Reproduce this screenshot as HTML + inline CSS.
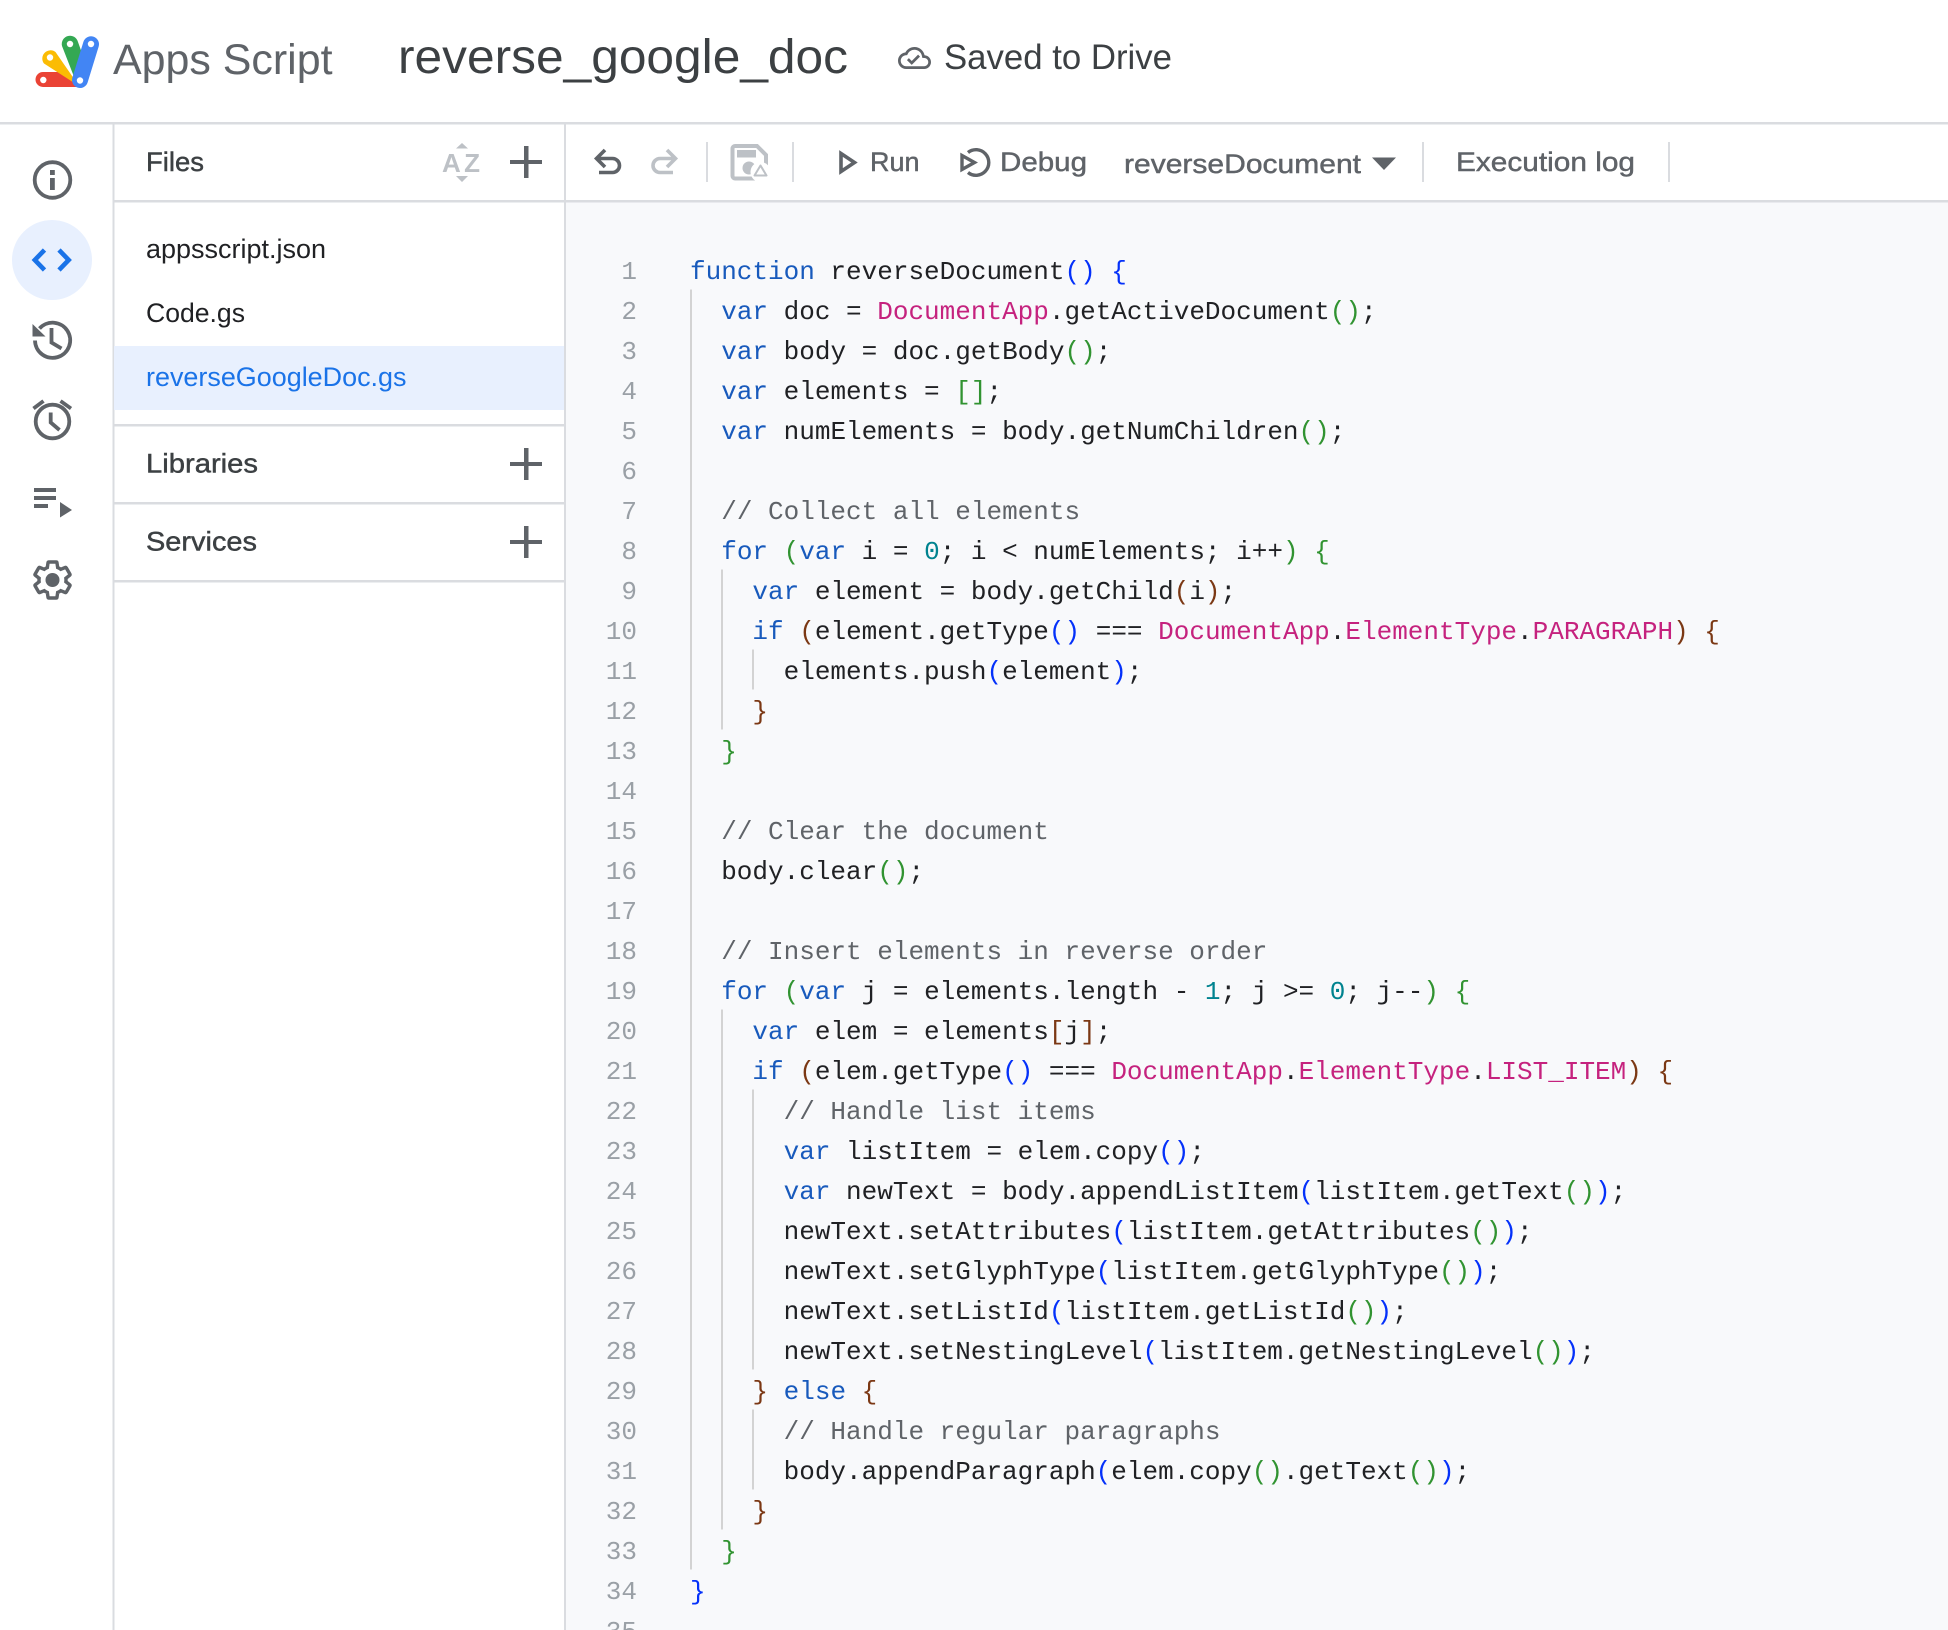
<!DOCTYPE html>
<html lang="en">
<head>
<meta charset="utf-8">
<title>Apps Script - reverse_google_doc</title>
<style>
html,body{margin:0;padding:0;background:#fff;width:1948px;height:1630px;overflow:hidden}
#page{position:relative;width:1948px;height:1630px;overflow:hidden;font-family:"Liberation Sans",sans-serif}
#bg{position:absolute;left:566px;top:202px;width:1382px;height:1428px;background:#f8f9fb}
svg{position:absolute;left:0;top:0}
pre{position:absolute;margin:0;font:26px/40px "Liberation Mono",monospace;white-space:pre;color:#202124}
#nums{left:577px;width:60px;top:252px;text-align:right;color:#9aa0a6}
#code{left:690px;top:252px}
.k{color:#185abc}.m{color:#c5227e}.c{color:#5f6368}.n{color:#00838f}
.b{color:#0431fa}.g{color:#319331}.r{color:#7b3814}
text{font-family:"Liberation Sans",sans-serif}
.med{stroke-width:.45px}
</style>
</head>
<body>
<div id="page">
<div id="bg"></div>
<svg width="1948" height="1630" viewBox="0 0 1948 1630">
  <!-- borders -->
  <g fill="#dadce0">
    <rect x="0" y="122" width="1948" height="2.5"/>
    <rect x="112.5" y="124" width="2" height="1506"/>
    <rect x="564" y="124" width="2" height="1506"/>
    <rect x="114" y="200" width="1834" height="2.5"/>
    <rect x="114" y="424" width="450" height="2.5"/>
    <rect x="114" y="502" width="450" height="2.5"/>
    <rect x="114" y="580" width="450" height="2.5"/>
    <rect x="706" y="142" width="2" height="40"/>
    <rect x="792" y="142" width="2" height="40"/>
    <rect x="1422" y="142" width="2" height="40"/>
    <rect x="1668" y="142" width="2" height="40"/>
  </g>
  <rect x="114" y="346" width="450" height="64" fill="#e8f0fe"/>

  <!-- logo -->
  <path d="M43 72H61L79 87H43a7.500 7.500 0 0 1 0-15z" fill="#ea4335"/>
  <path d="M44 63.500a8.200 8.200 0 0 1 11.500-11.500L79 86z" fill="#fbbc04"/>
  <path d="M62 46a8.200 8.200 0 0 1 16-4L88 70 78 87z" fill="#34a853"/>
  <path d="M91 44.300L80 80" stroke="#4285f4" stroke-width="16" stroke-linecap="round" fill="none"/>
  <g fill="#fff"><circle cx="43.300" cy="80" r="3.200"/><circle cx="50" cy="57.500" r="3.200"/><circle cx="70" cy="44" r="3.200"/><circle cx="91" cy="44" r="3.200"/><circle cx="80" cy="80.500" r="3.200"/></g>

  <!-- header text -->
  <text x="113" y="74" font-size="43" fill="#5f6368" textLength="219.500" lengthAdjust="spacingAndGlyphs">Apps Script</text>
  <text x="398" y="73" font-size="48" fill="#3c4043" textLength="450" lengthAdjust="spacingAndGlyphs">reverse_google_doc</text>
  <path transform="translate(898 41.500) scale(1.375)" fill="#5f6368" d="M19.350 10.040C18.670 6.590 15.640 4 12 4 9.110 4 6.600 5.640 5.350 8.040 2.340 8.360 0 10.910 0 14c0 3.310 2.690 6 6 6h13c2.760 0 5-2.240 5-5 0-2.640-2.050-4.780-4.650-4.960zM19 18H6c-2.210 0-4-1.790-4-4 0-2.050 1.530-3.760 3.560-3.970l1.070-.11.5-.95C8.080 7.140 9.940 6 12 6c2.620 0 4.880 1.860 5.390 4.430l.3 1.500 1.530.11c1.560.1 2.780 1.410 2.780 2.960 0 1.650-1.350 3-3 3zm-9-3.820l-2.090-2.090L6.500 13.500 10 17l6.010-6.010-1.410-1.410z"/>
  <text x="944" y="69" font-size="35" fill="#3c4043" textLength="228" lengthAdjust="spacingAndGlyphs">Saved to Drive</text>

  <!-- rail icons -->
  <circle cx="52.500" cy="180" r="17.800" fill="none" stroke="#5f6368" stroke-width="3.800"/>
  <rect x="50" y="170" width="4.800" height="5" fill="#5f6368"/>
  <rect x="50" y="178" width="4.800" height="12" fill="#5f6368"/>

  <circle cx="52" cy="260" r="40" fill="#e8f0fe"/>
  <path d="M44.500 250L34.800 260L44.500 270M59 250L68.700 260L59 270" fill="none" stroke="#1a73e8" stroke-width="4.600"/>

  <path d="M39.500 328.500A17.600 17.600 0 1 1 35 340.500" fill="none" stroke="#5f6368" stroke-width="3.800"/>
  <path d="M32.500 324V336.500H45.500z" fill="#5f6368"/>
  <path d="M51.500 328V342.500L61.500 348.500" fill="none" stroke="#5f6368" stroke-width="3.800"/>

  <circle cx="52.500" cy="421.500" r="16.800" fill="none" stroke="#5f6368" stroke-width="3.800"/>
  <path d="M33.500 408.500L43.500 401M60.500 401L71 408.500" fill="none" stroke="#5f6368" stroke-width="3.800"/>
  <path d="M50.700 412.500V422.500L59.500 430" fill="none" stroke="#5f6368" stroke-width="3.800"/>

  <g fill="#5f6368">
    <rect x="34" y="488" width="22" height="4"/>
    <rect x="34" y="496" width="22" height="4"/>
    <rect x="34" y="504" width="14" height="4"/>
    <path d="M60 502V517.500L72 510z"/>
  </g>

  <path transform="translate(30.900 558.400) scale(1.800)" fill="none" stroke="#5f6368" stroke-width="1.900" d="M19.430 12.980c.04-.32.07-.64.07-.98s-.03-.66-.07-.98l2.110-1.650c.19-.15.24-.42.12-.64l-2-3.460c-.12-.22-.39-.3-.61-.22l-2.490 1c-.52-.4-1.080-.73-1.690-.98l-.38-2.650C14.460 2.180 14.250 2 14 2h-4c-.25 0-.46.18-.49.42l-.38 2.650c-.61.25-1.170.59-1.690.98l-2.490-1c-.23-.09-.49 0-.61.22l-2 3.460c-.13.22-.07.49.12.64l2.110 1.650c-.04.32-.07.65-.07.98s.03.66.07.98l-2.110 1.650c-.19.15-.24.42-.12.64l2 3.460c.12.22.39.3.61.22l2.490-1c.52.4 1.080.73 1.690.98l.38 2.650c.03.24.24.42.49.42h4c.25 0 .46-.18.49-.42l.38-2.650c.61-.25 1.170-.59 1.690-.98l2.490 1c.23.09.49 0 .61-.22l2-3.460c.12-.22.07-.49-.12-.64l-2.110-1.650z"/>
  <circle cx="52.500" cy="580" r="7" fill="#5f6368"/>

  <!-- files panel -->
  <text x="146" y="171" font-size="27" fill="#3c4043" stroke="#3c4043" class="med" textLength="58" lengthAdjust="spacingAndGlyphs">Files</text>
  <text x="442" y="172" font-size="26" font-weight="bold" fill="#bdc1c6" textLength="38">AZ</text>
  <path d="M462 143L468 148.500H456zM462 182L468 176H456z" fill="#bdc1c6"/>
  <path d="M510 160h32v4h-32zM524 146h4.500v32H524z" fill="#5f6368"/>
  <text x="146" y="258" font-size="27" fill="#202124" textLength="180" lengthAdjust="spacingAndGlyphs">appsscript.json</text>
  <text x="146" y="322" font-size="27" fill="#202124" textLength="99" lengthAdjust="spacingAndGlyphs">Code.gs</text>
  <text x="146" y="386" font-size="27" fill="#1a73e8" textLength="260.500" lengthAdjust="spacingAndGlyphs">reverseGoogleDoc.gs</text>
  <text x="146" y="472.500" font-size="27" fill="#3c4043" stroke="#3c4043" class="med" textLength="112" lengthAdjust="spacingAndGlyphs">Libraries</text>
  <path d="M510 462h32v4h-32zM524 448h4.500v32H524z" fill="#5f6368"/>
  <text x="146" y="550.500" font-size="27" fill="#3c4043" stroke="#3c4043" class="med" textLength="111" lengthAdjust="spacingAndGlyphs">Services</text>
  <path d="M510 540h32v4h-32zM524 526h4.500v32H524z" fill="#5f6368"/>

  <!-- toolbar -->
  <path d="M605 150L596.500 158.500L605 167M597 158.500H612.500a7 7 0 0 1 0 14H599" fill="none" stroke="#5f6368" stroke-width="3.600"/>
  <path d="M667 150L675.500 158.500L667 167M675 158.500H660a7 7 0 0 0 0 14H673" fill="none" stroke="#bdc1c6" stroke-width="3.600"/>

  <path d="M735 146H757L766 155V176a2.500 2.500 0 0 1-2.500 2.500H735a2.500 2.500 0 0 1-2.500-2.500V148.500a2.500 2.500 0 0 1 2.500-2.500z" fill="none" stroke="#bdc1c6" stroke-width="4"/>
  <rect x="737" y="150" width="19" height="7.500" fill="#bdc1c6"/>
  <circle cx="749" cy="168" r="6.500" fill="#bdc1c6"/>
  <circle cx="760.500" cy="172" r="10" fill="#fff"/>
  <path d="M760.500 165.500L766.500 175.500H754.500z" fill="none" stroke="#bdc1c6" stroke-width="2" stroke-linejoin="round"/>

  <path d="M841 153.500V171.500L854.500 162.500z" fill="none" stroke="#5f6368" stroke-width="3.600"/>
  <text x="870" y="171" font-size="27" fill="#5f6368" stroke="#5f6368" class="med" textLength="49.500" lengthAdjust="spacingAndGlyphs">Run</text>
  <path d="M968 152.500A12.800 12.800 0 1 1 968 172.500" fill="none" stroke="#5f6368" stroke-width="3.400"/>
  <path d="M962 155.500V169.500L974.500 162.500z" fill="none" stroke="#5f6368" stroke-width="3.400"/>
  <text x="1000" y="171" font-size="27" fill="#5f6368" stroke="#5f6368" class="med" textLength="87" lengthAdjust="spacingAndGlyphs">Debug</text>
  <text x="1124" y="173" font-size="27" fill="#5f6368" stroke="#5f6368" class="med" textLength="237" lengthAdjust="spacingAndGlyphs">reverseDocument</text>
  <path d="M1372 157.500H1396L1384 170z" fill="#5f6368"/>
  <text x="1456" y="171" font-size="27" fill="#5f6368" stroke="#5f6368" class="med" textLength="179" lengthAdjust="spacingAndGlyphs">Execution log</text>

  <!-- indent guides -->
  <g fill="#d3d3d3">
    <rect x="690" y="289.500" width="2" height="1280"/>
    <rect x="721" y="569.500" width="2" height="160"/>
    <rect x="721" y="1009.500" width="2" height="520"/>
    <rect x="752" y="649.500" width="2" height="40"/>
    <rect x="752" y="1089.500" width="2" height="280"/>
    <rect x="752" y="1409.500" width="2" height="80"/>
  </g>
</svg>
<pre id="nums">1
2
3
4
5
6
7
8
9
10
11
12
13
14
15
16
17
18
19
20
21
22
23
24
25
26
27
28
29
30
31
32
33
34
35</pre>
<pre id="code"><span class="k">function</span> reverseDocument<span class="b">()</span> <span class="b">{</span>
  <span class="k">var</span> doc = <span class="m">DocumentApp</span>.getActiveDocument<span class="g">()</span>;
  <span class="k">var</span> body = doc.getBody<span class="g">()</span>;
  <span class="k">var</span> elements = <span class="g">[]</span>;
  <span class="k">var</span> numElements = body.getNumChildren<span class="g">()</span>;

  <span class="c">// Collect all elements</span>
  <span class="k">for</span> <span class="g">(</span><span class="k">var</span> i = <span class="n">0</span>; i &lt; numElements; i++<span class="g">)</span> <span class="g">{</span>
    <span class="k">var</span> element = body.getChild<span class="r">(</span>i<span class="r">)</span>;
    <span class="k">if</span> <span class="r">(</span>element.getType<span class="b">()</span> === <span class="m">DocumentApp</span>.<span class="m">ElementType</span>.<span class="m">PARAGRAPH</span><span class="r">)</span> <span class="r">{</span>
      elements.push<span class="b">(</span>element<span class="b">)</span>;
    <span class="r">}</span>
  <span class="g">}</span>

  <span class="c">// Clear the document</span>
  body.clear<span class="g">()</span>;

  <span class="c">// Insert elements in reverse order</span>
  <span class="k">for</span> <span class="g">(</span><span class="k">var</span> j = elements.length - <span class="n">1</span>; j &gt;= <span class="n">0</span>; j--<span class="g">)</span> <span class="g">{</span>
    <span class="k">var</span> elem = elements<span class="r">[</span>j<span class="r">]</span>;
    <span class="k">if</span> <span class="r">(</span>elem.getType<span class="b">()</span> === <span class="m">DocumentApp</span>.<span class="m">ElementType</span>.<span class="m">LIST_ITEM</span><span class="r">)</span> <span class="r">{</span>
      <span class="c">// Handle list items</span>
      <span class="k">var</span> listItem = elem.copy<span class="b">()</span>;
      <span class="k">var</span> newText = body.appendListItem<span class="b">(</span>listItem.getText<span class="g">()</span><span class="b">)</span>;
      newText.setAttributes<span class="b">(</span>listItem.getAttributes<span class="g">()</span><span class="b">)</span>;
      newText.setGlyphType<span class="b">(</span>listItem.getGlyphType<span class="g">()</span><span class="b">)</span>;
      newText.setListId<span class="b">(</span>listItem.getListId<span class="g">()</span><span class="b">)</span>;
      newText.setNestingLevel<span class="b">(</span>listItem.getNestingLevel<span class="g">()</span><span class="b">)</span>;
    <span class="r">}</span> <span class="k">else</span> <span class="r">{</span>
      <span class="c">// Handle regular paragraphs</span>
      body.appendParagraph<span class="b">(</span>elem.copy<span class="g">()</span>.getText<span class="g">()</span><span class="b">)</span>;
    <span class="r">}</span>
  <span class="g">}</span>
<span class="b">}</span></pre>
</div>
</body>
</html>
